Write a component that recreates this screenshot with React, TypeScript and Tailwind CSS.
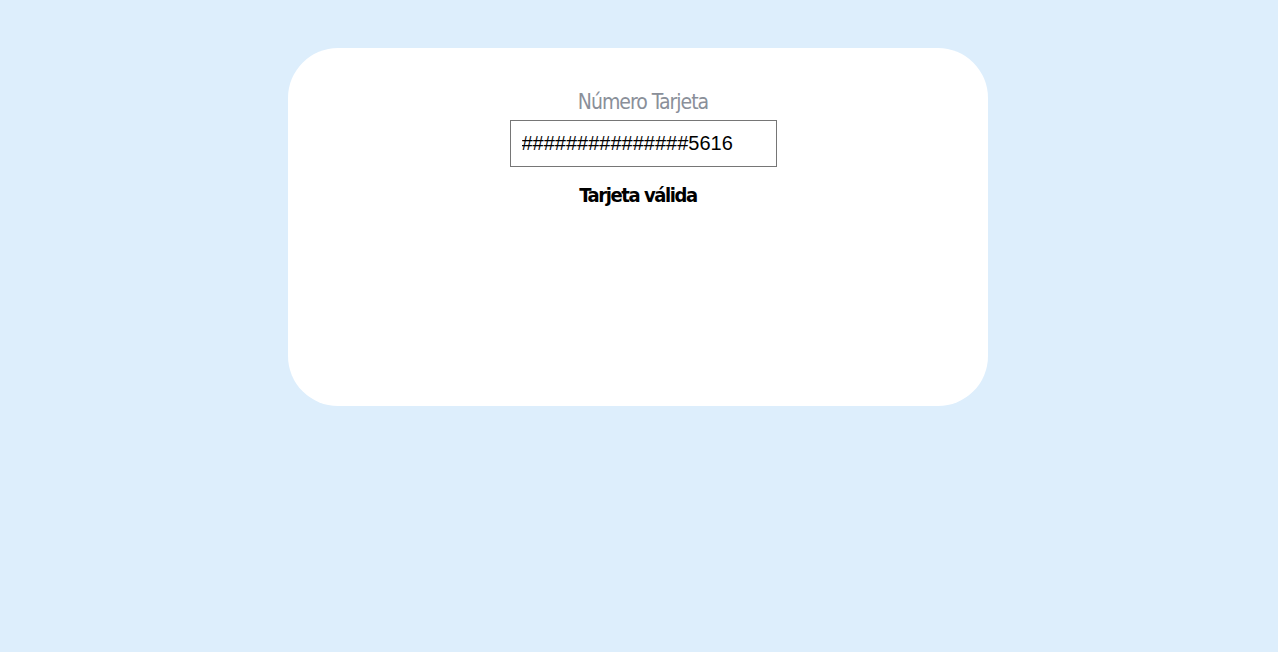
import { useState } from 'react'

export default function App() {
  const [value, setValue] = useState('###############5616')

  return (
    <div className="min-h-screen w-full bg-[#ddeefc] flex justify-center pt-[48px] pr-[2px]">
      <div className="w-[700px] h-[358px] bg-white rounded-[50px] flex flex-col items-center pt-[40px]">
        <div className="flex flex-col items-center pl-[10px]">
          <label
            htmlFor="card"
            className="text-[21px] leading-[28px] text-[#8a8f99] font-['DejaVu_Sans_Condensed',sans-serif] tracking-[-1px]"
          >
            Número Tarjeta
          </label>
          <input
            id="card"
            type="text"
            value={value}
            onChange={(e) => setValue(e.target.value)}
            className="mt-[4px] w-[267px] h-[47px] border border-[#767676] pl-[11px] pr-[10px] text-[20px] text-black font-['Liberation_Sans',sans-serif] outline-none"
          />
        </div>
        <p className="mt-[14px] text-[20px] leading-[28px] font-bold text-black font-['DejaVu_Sans_Condensed',sans-serif] tracking-[-1.4px]">
          Tarjeta válida
        </p>
      </div>
    </div>
  )
}
